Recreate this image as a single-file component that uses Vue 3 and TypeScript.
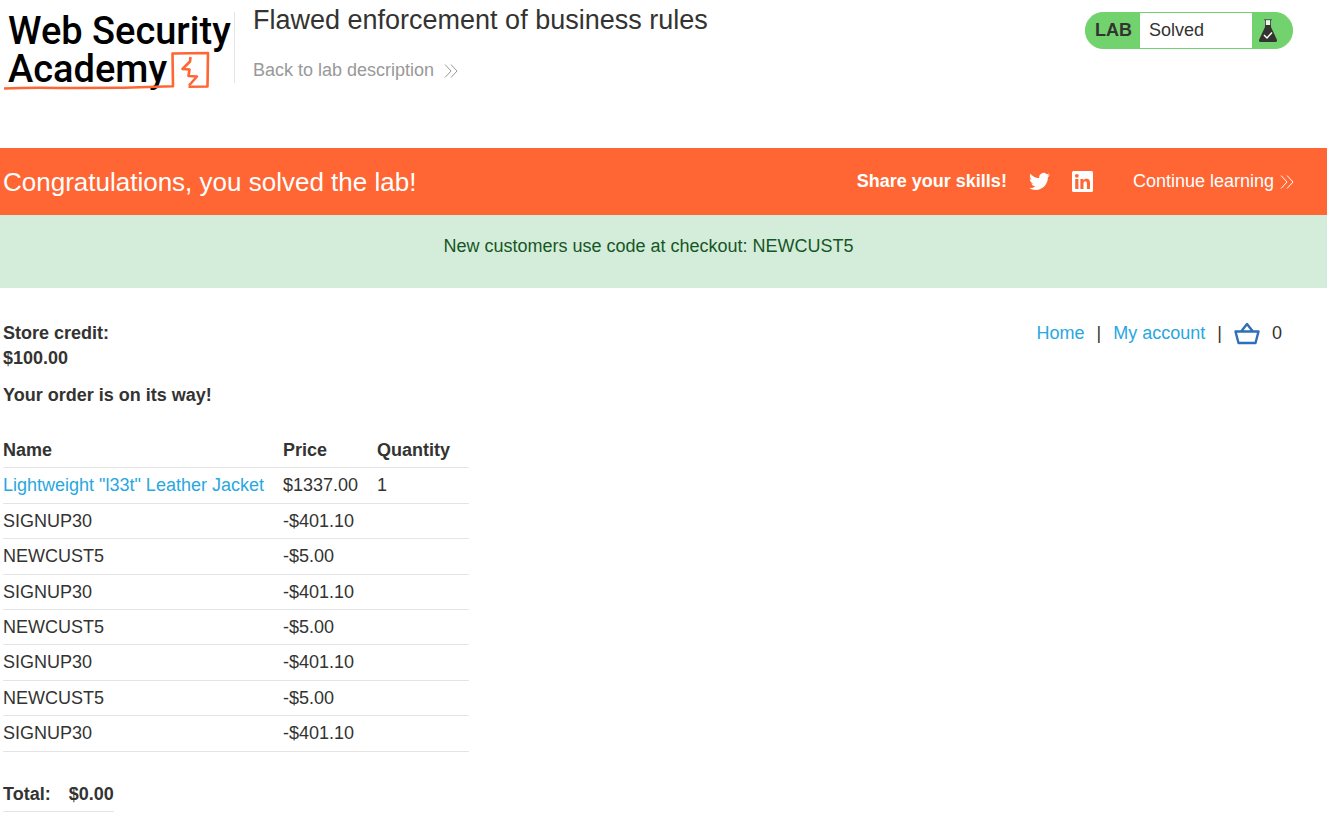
<script setup lang="ts">
interface OrderLine {
  name: string
  price: string
  quantity?: number
  link?: boolean
}

const lines: OrderLine[] = [
  { name: 'Lightweight "l33t" Leather Jacket', price: '$1337.00', quantity: 1, link: true },
  { name: 'SIGNUP30', price: '-$401.10' },
  { name: 'NEWCUST5', price: '-$5.00' },
  { name: 'SIGNUP30', price: '-$401.10' },
  { name: 'NEWCUST5', price: '-$5.00' },
  { name: 'SIGNUP30', price: '-$401.10' },
  { name: 'NEWCUST5', price: '-$5.00' },
  { name: 'SIGNUP30', price: '-$401.10' },
]
</script>

<template>
  <div class="page">
    <header class="lab-header">
      <a class="logo" href="#" aria-label="Web Security Academy">
        <span class="logo-line">Web Security</span>
        <span class="logo-line">Academy</span>
        <svg class="logo-mark" viewBox="0 0 206 42" width="206" height="42" aria-hidden="true">
          <g fill="none" stroke="#ff6633" stroke-linejoin="round">
            <path d="M0 39.5Q28 38.2 56 39Q112 39.3 169 37.2L168.5 4.5L204 4L203.500 37.500L184.500 37.8" stroke-width="2.6" />
            <path d="M186.500 8L186 12.500L178.500 20L185.500 20.500L184.500 27L193 27.500L185 36.500" stroke-width="2.6" />
          </g>
        </svg>
      </a>
      <div class="title">
        <h1>Flawed enforcement of business rules</h1>
        <a class="back" href="#">
          Back to lab description
          <svg viewBox="0 0 14 14" width="14" height="14" aria-hidden="true">
            <path d="M1 0.500L7 7L1 13.500M7 0.500L13 7L7 13.500" fill="none" stroke="currentColor" />
          </svg>
        </a>
      </div>
      <div class="status">
        <span class="status-tag">LAB</span>
        <span class="status-text">Solved</span>
        <span class="status-icon">
          <svg viewBox="0 0 18 23" width="18" height="23" aria-hidden="true">
            <path d="M6.500 1H11.500V8H6.500z" fill="#e8f6e7" />
            <path d="M5 .7H13M6.500 1V6M11.500 1V6" fill="none" stroke="#555" />
            <path d="M6 6H12V8L17.800 20.500Q18.500 23 16.500 23H1.500Q-.5 23 .2 20.500L6 8z" fill="#333332" />
            <path d="M5 16L8 19L13 13.500" fill="none" stroke="#fff" stroke-width="1.500" />
          </svg>
        </span>
      </div>
    </header>

    <section class="solved">
      <h2>Congratulations, you solved the lab!</h2>
      <div class="share">
        <span class="share-label">Share your skills!</span>
        <a href="#" aria-label="Share on Twitter">
          <svg viewBox="0 0 24 24" width="21" height="21" aria-hidden="true">
            <path fill="#fff" d="M23.950 4.570a10 10 0 0 1-2.820.77 4.960 4.960 0 0 0 2.160-2.720c-.95.55-2 .96-3.130 1.180a4.920 4.920 0 0 0-8.380 4.480C7.690 8.100 4.070 6.130 1.640 3.160a4.820 4.820 0 0 0-.67 2.480c0 1.710.87 3.210 2.190 4.100a4.900 4.900 0 0 1-2.230-.62v.06a4.920 4.920 0 0 0 3.950 4.830 5 5 0 0 1-2.210.08 4.940 4.940 0 0 0 4.600 3.420A9.870 9.870 0 0 1 0 19.540a13.990 13.990 0 0 0 7.550 2.210c9.050 0 14-7.500 14-13.980 0-.21 0-.42-.02-.63a9.940 9.940 0 0 0 2.420-2.570z" />
          </svg>
        </a>
        <a href="#" aria-label="Share on LinkedIn">
          <svg viewBox="0 0 21 21" width="21" height="21" aria-hidden="true">
            <rect width="21" height="21" rx="1.500" fill="#fff" />
            <g fill="#ff6633">
              <circle cx="4.800" cy="4.800" r="1.900" />
              <path d="M3.200 8H6.400V18H3.200z" />
              <path d="M8.400 8H11.400V9.400C12.100 8.300 13.100 7.700 14.400 7.700C17.300 7.700 18 9.600 18 12.200V18H14.900V12.900C14.900 11.500 14.800 10.300 13.300 10.300C11.800 10.300 11.500 11.400 11.500 12.700V18H8.400z" />
            </g>
          </svg>
        </a>
      </div>
      <a class="continue" href="#">
        Continue learning
        <svg viewBox="0 0 14 14" width="14" height="14" aria-hidden="true">
          <path d="M1 0.500L7 7L1 13.500M7 0.500L13 7L7 13.500" fill="none" stroke="currentColor" />
        </svg>
      </a>
    </section>

    <p class="promo">New customers use code at checkout: NEWCUST5</p>

    <main class="content">
      <div class="top">
        <p class="credit">Store credit:<br />$100.00</p>
        <nav class="nav">
          <a href="#">Home</a>
          <span>|</span>
          <a href="#">My account</a>
          <span>|</span>
          <a class="cart" href="#" aria-label="Basket">
            <svg viewBox="0 0 26 24" width="26" height="24" aria-hidden="true">
              <path d="M1.500 9.500H24.500L21.500 21H4.500zM7.500 9L13 2L18.500 9" fill="none" stroke="#2f6fb8" stroke-width="2.400" stroke-linejoin="round" />
            </svg>
          </a>
          <span>0</span>
        </nav>
      </div>
      <p class="message">Your order is on its way!</p>

      <table class="order">
        <thead>
          <tr>
            <th scope="col">Name</th>
            <th scope="col">Price</th>
            <th scope="col">Quantity</th>
          </tr>
        </thead>
        <tbody>
          <tr v-for="(line, i) in lines" :key="i">
            <td>
              <a v-if="line.link" href="#">{{ line.name }}</a>
              <template v-else>{{ line.name }}</template>
            </td>
            <td>{{ line.price }}</td>
            <td>{{ line.quantity }}</td>
          </tr>
        </tbody>
      </table>

      <table class="total">
        <tbody>
          <tr>
            <th scope="row">Total:</th>
            <td>$0.00</td>
          </tr>
        </tbody>
      </table>
    </main>
  </div>
</template>

<style>
body {
  margin: 0;
  background: #fff;
}
</style>

<style scoped>
.page {
  font-family: "Liberation Sans", Arial, sans-serif;
  font-size: 18px;
  line-height: 25px;
  color: #333332;
}

a {
  color: #29a7df;
  text-decoration: none;
}

h1,
h2,
p {
  margin: 0;
}

h1,
h2 {
  font-size: 27px;
  font-weight: 400;
  line-height: 32px;
}

h2 {
  font-size: 26px;
}

svg {
  display: block;
  flex: none;
}

.lab-header {
  display: flex;
  align-items: flex-start;
  box-sizing: border-box;
  min-height: 148px;
  padding: 12px 34px 0 4px;
}

.logo {
  position: relative;
  box-sizing: border-box;
  width: 231px;
  height: 71px;
  padding-left: 4px;
  border-right: 1px solid #e5e5e5;
  color: #000;
  font-family: Roboto, sans-serif;
  font-size: 38px;
  font-weight: 500;
  line-height: 38px;
  white-space: nowrap;
}

.logo-line {
  display: block;
}

.logo-mark {
  position: absolute;
  top: 37px;
  left: 0;
}

.title {
  flex: 1;
  padding-left: 18px;
}

.title h1 {
  margin-top: -8px;
}

.back {
  display: inline-flex;
  align-items: center;
  gap: 10px;
  margin-top: 22px;
  color: #999;
}

.status {
  display: flex;
  box-sizing: border-box;
  width: 208px;
  height: 37px;
  border: 1px solid #72d26e;
  border-radius: 18px;
  overflow: hidden;
  background: #72d26e;
  line-height: 35px;
}

.status-tag {
  width: 54px;
  box-sizing: border-box;
  padding-left: 9px;
  font-weight: 700;
}

.status-text {
  width: 112px;
  box-sizing: border-box;
  padding-left: 9px;
  background: #fff;
}

.status-icon {
  display: flex;
  align-items: center;
  padding-left: 7px;
}

.solved {
  display: flex;
  align-items: center;
  min-height: 67px;
  padding: 0 33px 0 3px;
  background: #ff6633;
  color: #fff;
}

.share {
  display: flex;
  align-items: center;
  gap: 22px;
  margin-left: auto;
  font-weight: 700;
}

.continue {
  display: flex;
  align-items: center;
  gap: 6px;
  margin-left: 40px;
  color: #fff;
}

.promo {
  padding: 19px 33px 29px 3px;
  background: #d4eddb;
  color: #155724;
  text-align: center;
}

.content {
  padding: 33px 33px 12px 3px;
}

.top {
  display: flex;
  justify-content: space-between;
  align-items: flex-start;
}

.credit,
.message {
  font-weight: 700;
}

.nav {
  display: flex;
  align-items: center;
  gap: 12px;
  padding-right: 12px;
}

.message {
  margin-top: 12px;
}

table {
  border-collapse: collapse;
  line-height: 1.3;
}

th,
td {
  padding: 6px 19px 5px 0;
  border-bottom: 1px solid #e5e5e5;
  text-align: left;
  height: 1.3em;
}

.order,
.total {
  margin-top: 25px;
}

.total th {
  padding-right: 18px;
}

.total td {
  padding-right: 0;
  font-weight: 700;
}
</style>
